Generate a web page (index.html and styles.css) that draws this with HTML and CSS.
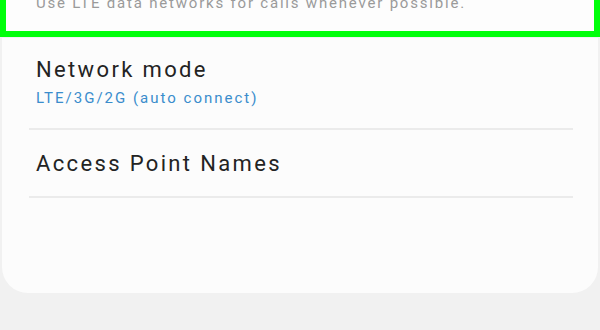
FILE: index.html
```html
<!DOCTYPE html>
<html>
<head>
<meta charset="utf-8">
<link rel="stylesheet" href="styles.css">
</head>
<body>
<div class="highlight">
  <p class="hint">Use LTE data networks for calls whenever possible.</p>
</div>
<div class="card">
  <div class="item">
    <div class="title">Network mode</div>
    <div class="sub">LTE/3G/2G (auto connect)</div>
  </div>
  <div class="item item-2">
    <div class="title">Access Point Names</div>
  </div>
</div>
</body>
</html>
```
FILE: styles.css
```css
html, body {
  margin: 0;
  padding: 0;
}
body {
  width: 600px;
  height: 330px;
  overflow: hidden;
  background: #f1f1f1;
  font-family: Roboto, "Liberation Sans", sans-serif;
}
.highlight {
  box-sizing: border-box;
  height: 59px;
  margin-top: -22px;
  border: 6px solid #00ff0a;
  background: #fdfdfd;
  padding: 9px 0 0 30px;
}
.hint {
  margin: 0;
  font-size: 15px;
  line-height: 20px;
  letter-spacing: 1.8px;
  color: #9a9a9a;
}
.card {
  box-sizing: border-box;
  height: 255px;
  margin: 1px 2px 0;
  background: #fcfcfc;
  border-radius: 0 0 26px 26px;
  padding-top: 18px;
}
.item {
  margin: 0 25px 0 27px;
  padding: 0 0 20px 7px;
  border-bottom: 2px solid #ebebeb;
}
.item-2 {
  padding-top: 20px;
  padding-bottom: 18px;
}
.title {
  font-size: 22px;
  line-height: 28px;
  letter-spacing: 2.35px;
  color: #232323;
}
.sub {
  margin-top: 4px;
  font-size: 15px;
  line-height: 20px;
  letter-spacing: 2px;
  color: #3a8dcc;
}
```
